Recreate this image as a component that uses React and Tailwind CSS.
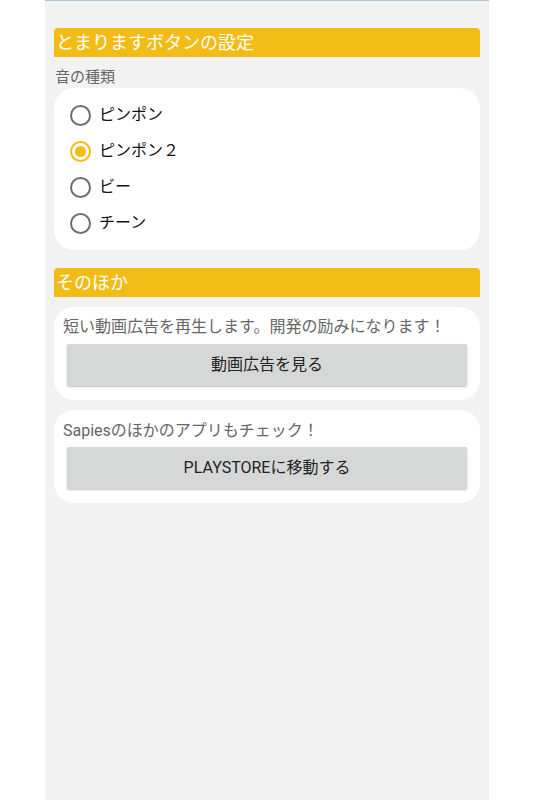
export default function App() {
  const font = { fontFamily: 'Roboto, "Noto Sans CJK JP", sans-serif' };
  const options = ["ピンポン", "ピンポン２", "ビー", "チーン"];
  const selected = 1;
  return (
    <div className="min-h-[800px] w-full bg-white" style={font}>
      <div className="mx-auto flex min-h-[800px] w-[444px] flex-col border-t border-[#a9c8d0] bg-[#f2f2f2] px-[9px]">
        <div className="mt-[27px] flex h-[29px] items-center rounded-t-[4px] bg-[#f2bc17] pl-[2px] text-[18px] leading-none text-white">
          とまりますボタンの設定
        </div>
        <div className="mt-[10px] h-[21px] pl-[1px] text-[15px] leading-[21px] text-[#666]">音の種類</div>
        <div className="flex flex-col rounded-[20px] bg-white py-[9px]">
          {options.map((o, i) => (
            <div key={o} className="flex h-[36px] items-center">
              <div
                className={
                  "ml-[16px] flex h-[21px] w-[21px] items-center justify-center rounded-full border-2 " +
                  (i === selected ? "border-[#f2bc17]" : "border-[#6e6e6e]")
                }
              >
                {i === selected && <div className="h-[11px] w-[11px] rounded-full bg-[#f2bc17]" />}
              </div>
              <span className="ml-[8px] text-[16px] text-[#111]">{o}</span>
            </div>
          ))}
        </div>
        <div className="mt-[18px] flex h-[29px] items-center rounded-t-[4px] bg-[#f2bc17] pl-[2px] text-[18px] leading-none text-white">
          そのほか
        </div>
        <div className="mt-[10px] flex flex-col rounded-[20px] bg-white px-[13px] pb-[14px] pt-[9px]">
          <div className="-ml-[4px] h-[22px] text-[16px] leading-[22px] text-[#666]">
            短い動画広告を再生します。開発の励みになります！
          </div>
          <button className="mt-[6px] h-[42px] w-full rounded-[2px] bg-[#d6d7d7] text-[16px] text-[#222] shadow-[0_1px_2px_rgba(0,0,0,0.25)]">
            動画広告を見る
          </button>
        </div>
        <div className="mt-[10px] flex flex-col rounded-[20px] bg-white px-[13px] pb-[14px] pt-[10px]">
          <div className="-ml-[4px] h-[22px] text-[16px] leading-[22px] text-[#666]">
            Sapiesのほかのアプリもチェック！
          </div>
          <button className="mt-[5px] h-[42px] w-full rounded-[2px] bg-[#d6d7d7] text-[16px] text-[#222] shadow-[0_1px_2px_rgba(0,0,0,0.25)]">
            PLAYSTOREに移動する
          </button>
        </div>
      </div>
    </div>
  );
}
